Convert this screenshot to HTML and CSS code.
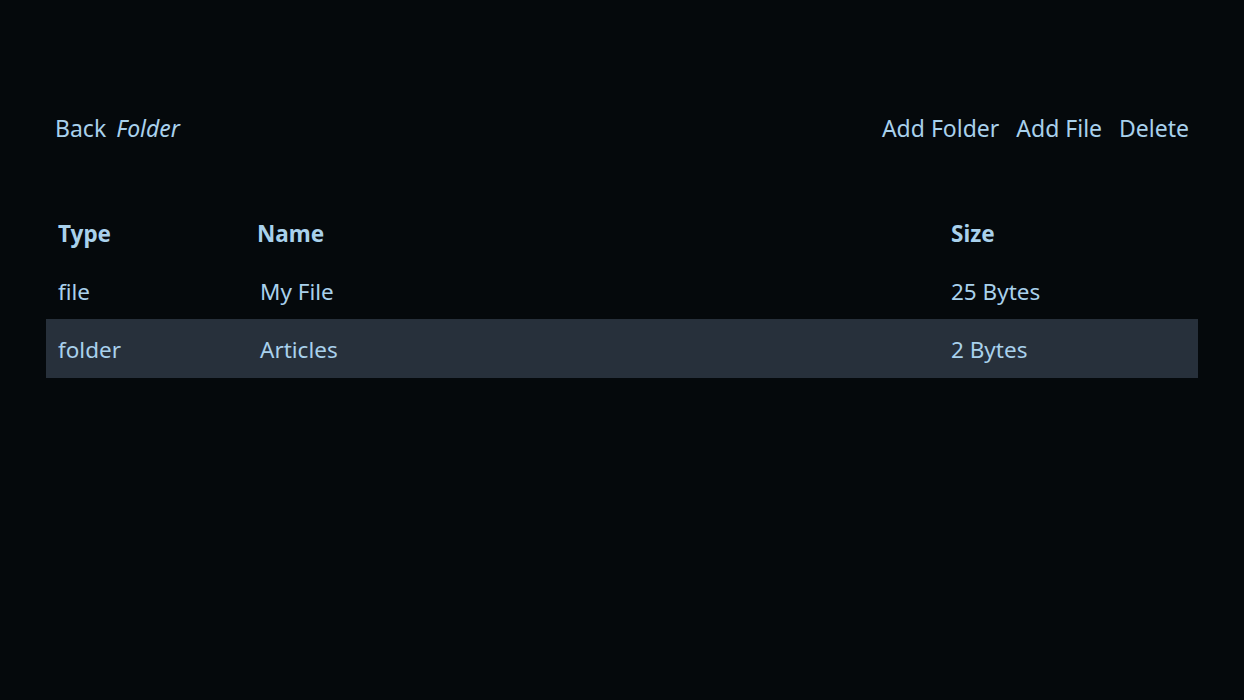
FILE: index.html
```html
<!DOCTYPE html>
<html>
<head>
<meta charset="utf-8">
<link rel="stylesheet" href="styles.css">
</head>
<body>
<div class="page">
  <div class="toolbar">
    <div class="left">
      <span class="link">Back</span>
      <span class="crumb">Folder</span>
    </div>
    <div class="right">
      <span class="link">Add Folder</span>
      <span class="link">Add File</span>
      <span class="link">Delete</span>
    </div>
  </div>
  <table class="files">
    <thead>
      <tr><th class="c-type">Type</th><th class="c-name">Name</th><th class="c-size">Size</th></tr>
    </thead>
    <tbody>
      <tr><td>file</td><td><span class="name">My File</span></td><td>25 Bytes</td></tr>
      <tr class="sel"><td>folder</td><td><span class="name">Articles</span></td><td>2 Bytes</td></tr>
    </tbody>
  </table>
</div>
</body>
</html>
```
FILE: styles.css
```css
html, body {
  margin: 0;
  background: #05090c;
  height: 100%;
}
body {
  font-family: "Noto Sans", "Open Sans", sans-serif;
  font-size: 22.5px;
  color: #a9d1ec;
}
.page {
  padding: 108px 46px 0 46px;
}
.toolbar {
  display: flex;
  justify-content: space-between;
  align-items: center;
  padding: 0 9px;
  height: 40px;
  font-size: 23px;
}
.left {
  display: flex;
  gap: 10px;
}
.right {
  display: flex;
  gap: 17px;
}
.crumb { font-style: italic; font-size: 23px; }
.files {
  margin-top: 57px;
  width: 100%;
  border-collapse: collapse;
}
.files th, .files td {
  text-align: left;
  padding: 0 12px;
  height: 58px;
}
.files th { font-weight: 700; height: 56px; }
.files td { padding-top: 2px; height: 56px; }
.c-type { width: 175px; }
.c-size { width: 235px; }
.name { margin-left: 3px; }
.sel { background: #27303b; }
.sel td { height: 57px; }
```
